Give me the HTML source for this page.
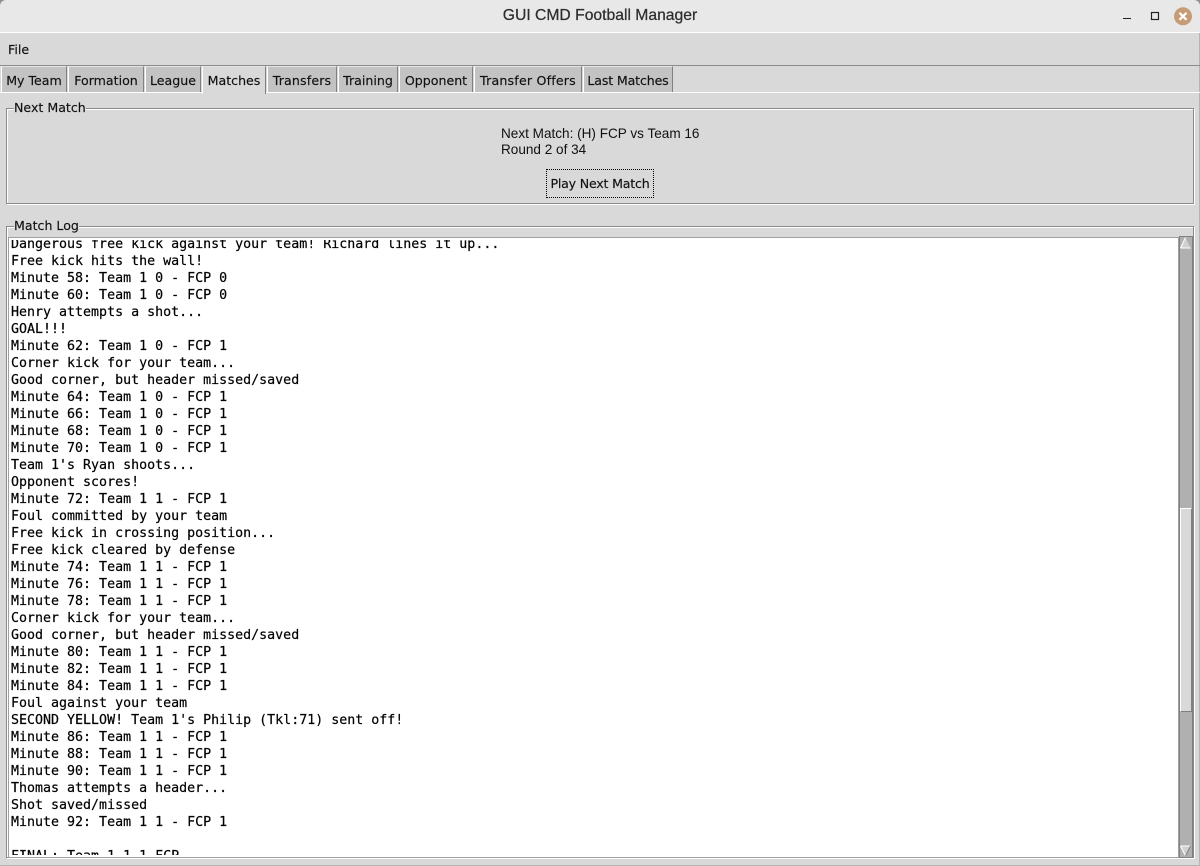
<!DOCTYPE html>
<html><head><meta charset="utf-8"><style>
html,body{margin:0;padding:0;width:1200px;height:866px;overflow:hidden;background:#d9d9d9}
div{position:absolute;box-sizing:border-box}
.ui{font-family:"DejaVu Sans",sans-serif;font-size:12.6px;color:#111;white-space:nowrap;line-height:16px;-webkit-text-stroke:.15px #111}
.tab{top:66px;height:27px;background:#c3c3c3;border-left:1px solid #fff;border-top:1px solid #e4e4e4;border-right:1px solid #808080;text-align:center;padding-top:6px}
.frame{border:1px solid #8a8a8a;box-shadow:inset 1px 1px 0 #fff,1px 1px 0 #fff}
.legend{background:#d9d9d9;padding:0}
#log{left:11px;top:235px;width:1160px;font-family:"DejaVu Sans Mono",monospace;font-size:13.3px;line-height:17px;white-space:pre;color:#000;-webkit-text-stroke:.2px #000}
</style></head><body>
<div style="left:0;top:0;width:1200px;height:32px;background:#e8e8e8"></div>
<div style="left:0;top:32px;width:1200px;height:1px;background:#fff"></div>
<div style="left:1199px;top:33px;width:1px;height:833px;background:#b4b4b4"></div>
<div style="left:0;top:865px;width:1200px;height:1px;background:#b4b4b4"></div>
<svg style="position:absolute;left:0;top:0" width="1200" height="6" viewBox="0 0 1200 6">
<path d="M0 0H5Q1 1 0 5Z" fill="#8f8f8f"/>
<path d="M1200 0H1195Q1199 1 1200 5Z" fill="#8f8f8f"/>
</svg>
<div style="left:0;top:2px;width:1200px;height:28px;text-align:center;font:15.7px/28px 'Liberation Sans',sans-serif;color:#2d2d2d;-webkit-text-stroke:.25px #2d2d2d">GUI CMD Football Manager</div>
<svg style="position:absolute;left:1115px;top:3px" width="85" height="26" viewBox="0 0 85 26">
<rect x="8" y="15" width="8" height="1" fill="#222"/>
<rect x="36.500" y="9.500" width="7" height="7" fill="none" stroke="#222" stroke-width="1.200"/>
<circle cx="68" cy="13.300" r="9" fill="#c69c77"/>
<path d="M64.500 9.800L71.500 16.800M71.500 9.800L64.500 16.800" stroke="#fff" stroke-width="2.200"/>
</svg>
<div class="ui" style="left:8px;top:42px">File</div>
<div style="left:0;top:65px;width:1200px;height:1px;background:#8c8c8c"></div>
<div class="ui tab" style="left:1px;width:66px">My Team</div>
<div class="ui tab" style="left:68px;width:76px">Formation</div>
<div class="ui tab" style="left:145px;width:56px">League</div>
<div class="ui tab" style="left:202px;width:64px;background:#d9d9d9;height:28px">Matches</div>
<div class="ui tab" style="left:267px;width:70px;letter-spacing:.15px">Transfers</div>
<div class="ui tab" style="left:338px;width:60px">Training</div>
<div class="ui tab" style="left:399px;width:74px">Opponent</div>
<div class="ui tab" style="left:474px;width:108px;letter-spacing:.2px">Transfer Offers</div>
<div class="ui tab" style="left:583px;width:90px;letter-spacing:-.15px">Last Matches</div>
<div style="left:0;top:92px;width:202px;height:1px;background:#fff"></div>
<div style="left:266px;top:92px;width:934px;height:1px;background:#fff"></div>
<div class="frame" style="left:6px;top:108px;width:1188px;height:96px"></div>
<div class="ui legend" style="left:14px;top:100px">Next Match</div>
<div style="left:501px;top:126px;font:13.570px/16px 'Liberation Sans',sans-serif;white-space:nowrap;color:#111">Next Match: (H) FCP vs Team 16<br>Round 2 of 34</div>
<div class="ui" style="left:546px;top:169px;width:108px;height:29px;border:1px dotted #000;text-align:center;padding-top:6px;letter-spacing:-.2px">Play Next Match</div>
<div class="frame" style="left:6px;top:226px;width:1188px;height:632px"></div>
<div class="ui legend" style="left:14px;top:218px">Match Log</div>
<div style="left:8px;top:237px;width:1171px;height:621px;background:#fff;border:1px solid #a0a0a0"></div>
<div style="left:9px;top:240px;width:1169px;height:615px;overflow:hidden">
<div id="log" style="left:2px;top:-4px">Dangerous free kick against your team! Richard lines it up...
Free kick hits the wall!
Minute 58: Team 1 0 - FCP 0
Minute 60: Team 1 0 - FCP 0
Henry attempts a shot...
GOAL!!!
Minute 62: Team 1 0 - FCP 1
Corner kick for your team...
Good corner, but header missed/saved
Minute 64: Team 1 0 - FCP 1
Minute 66: Team 1 0 - FCP 1
Minute 68: Team 1 0 - FCP 1
Minute 70: Team 1 0 - FCP 1
Team 1's Ryan shoots...
Opponent scores!
Minute 72: Team 1 1 - FCP 1
Foul committed by your team
Free kick in crossing position...
Free kick cleared by defense
Minute 74: Team 1 1 - FCP 1
Minute 76: Team 1 1 - FCP 1
Minute 78: Team 1 1 - FCP 1
Corner kick for your team...
Good corner, but header missed/saved
Minute 80: Team 1 1 - FCP 1
Minute 82: Team 1 1 - FCP 1
Minute 84: Team 1 1 - FCP 1
Foul against your team
SECOND YELLOW! Team 1's Philip (Tkl:71) sent off!
Minute 86: Team 1 1 - FCP 1
Minute 88: Team 1 1 - FCP 1
Minute 90: Team 1 1 - FCP 1
Thomas attempts a header...
Shot saved/missed
Minute 92: Team 1 1 - FCP 1

FINAL: Team 1 1-1 FCP</div>
</div>
<div style="left:1179px;top:236px;width:14px;height:622px;background:#b0b0b0;border:1px solid #808080"></div>
<div style="left:1180px;top:508px;width:12px;height:204px;background:#d9d9d9;border:1px solid #808080;border-left-color:#fff;border-top-color:#fff"></div>
<svg style="position:absolute;left:1179px;top:236px" width="14" height="622" viewBox="0 0 14 622">
<path d="M1.500 12L6.500 1.500L11.500 12Z" fill="#d0d0d0"/>
<path d="M1.500 12L6.500 1.500" stroke="#fff" fill="none"/>
<path d="M1.500 12H11.500" stroke="#fff" fill="none"/>
<path d="M1.500 610L6.500 620L11.500 610Z" fill="#d0d0d0"/>
<path d="M1.500 610H11.500M1.500 610L6.500 620" stroke="#fff" fill="none"/>
<path d="M11.500 610L6.500 620" stroke="#808080" fill="none"/>
</svg>
</body></html>
